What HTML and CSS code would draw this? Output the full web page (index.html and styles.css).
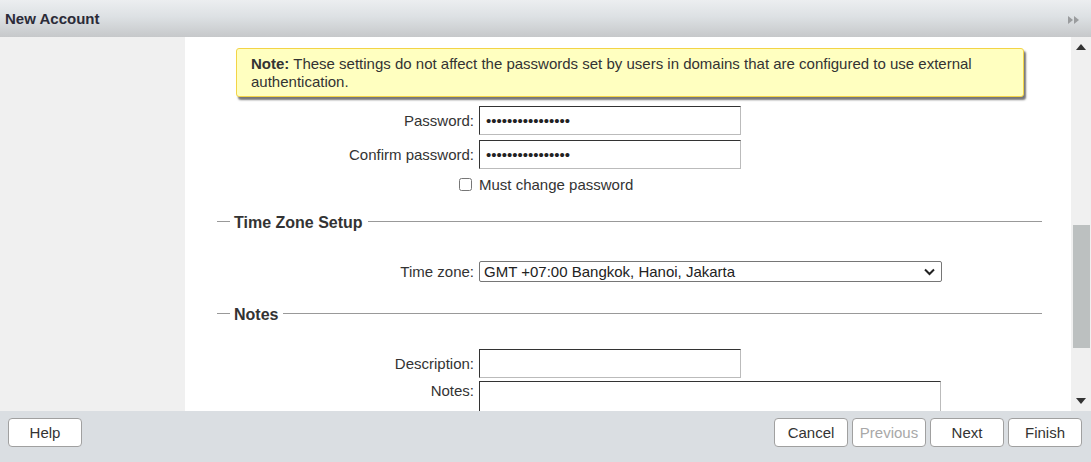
FILE: index.html
```html
<!DOCTYPE html>
<html>
<head>
<title>New Account</title>
<link rel="stylesheet" href="styles.css">
</head>
<body>

<div class="window">
  <div class="titlebar">
    <span class="title">New Account</span>
    <svg class="collapse" width="11" height="8" viewBox="0 0 11 8">
      <path d="M0 0 L5 4 L0 8 Z M6 0 L11 4 L6 8 Z" fill="#9a9c9e"/>
    </svg>
  </div>

  <div class="main">
    <div class="sidebar"></div>

    <div class="content">
      <div class="note">
        <span class="note-tag">Note:</span> These settings do not affect the passwords set by users in domains that are configured to use external authentication.
      </div>

      <div class="row first">
        <label>Password:</label>
        <input type="password" class="text" value="1234567890123456">
      </div>
      <div class="row">
        <label>Confirm password:</label>
        <input type="password" class="text" value="1234567890123456">
      </div>
      <div class="row check">
        <input type="checkbox" id="mustChange">
        <label for="mustChange" class="check-label">Must change password</label>
      </div>

      <div class="section tz">Time Zone Setup</div>

      <div class="row select-row">
        <label>Time zone:</label>
        <div class="select">
          <span>GMT +07:00 Bangkok, Hanoi, Jakarta</span>
          <svg width="11" height="8" viewBox="0 0 11 8">
            <path d="M1 1.5 L5.5 6 L10 1.5" fill="none" stroke="#222" stroke-width="2"/>
          </svg>
        </div>
      </div>

      <div class="section notes">Notes</div>

      <div class="row desc">
        <label>Description:</label>
        <input type="text" class="text">
      </div>
      <div class="row notes-row">
        <label>Notes:</label>
        <textarea class="text area"></textarea>
      </div>
    </div>

    <div class="scrollbar">
      <svg class="arrow" width="10" height="6" viewBox="0 0 10 6"><path d="M0 6 L5 0 L10 6 Z" fill="#333"/></svg>
      <div class="track"><div class="thumb"></div></div>
      <svg class="arrow" width="10" height="6" viewBox="0 0 10 6"><path d="M0 0 L5 6 L10 0 Z" fill="#333"/></svg>
    </div>
  </div>

  <div class="footer">
    <button class="btn">Help</button>
    <div class="nav">
      <button class="btn">Cancel</button>
      <button class="btn" disabled>Previous</button>
      <button class="btn">Next</button>
      <button class="btn">Finish</button>
    </div>
  </div>
</div>

</body>
</html>
```

FILE: styles.css
```css
html, body { margin: 0; padding: 0; height: 100%; }
body { font-family: Arial, "Liberation Sans", sans-serif; font-size: 15px; color: #333; }

.window { display: flex; flex-direction: column; height: 100vh; overflow: hidden; }

.titlebar {
  height: 37px;
  flex: none;
  display: flex;
  align-items: center;
  justify-content: space-between;
  padding: 0 12px 0 5px;
  box-sizing: border-box;
  background: linear-gradient(#eceef0, #dde1e4 45%, #c6c8ca);
}
.title { font-weight: bold; font-size: 15px; color: #2b2b38; }
.collapse { margin-top: 2px; }

.main { flex: 1; display: flex; min-height: 0; }
.sidebar { width: 185px; flex: none; background: #f0f0f0; }

.content { flex: 1; background: #fff; overflow: hidden; }

.note {
  margin: 11px 0 0 51px;
  width: 788px;
  box-sizing: border-box;
  padding: 6px 14px 5px;
  line-height: 18px;
  background: #ffffc0;
  border: 1px solid #f3d447;
  border-radius: 3px;
  box-shadow: 2px 3px 2px #777;
}
.note-tag { font-weight: bold; }

.row {
  display: grid;
  grid-template-columns: 289px auto;
  column-gap: 5px;
  align-items: center;
  margin-top: 5px;
}
.row label { text-align: right; }
.row.first { margin-top: 9px; }

.text {
  width: 262px;
  height: 29px;
  box-sizing: border-box;
  padding: 0 6px;
  border: 1px solid;
  border-color: #333 #bbb #bbb #333;
  font-family: inherit;
  font-size: 15px;
  color: #222;
  background: #fff;
}
.area { width: 462px; height: 60px; resize: none; align-self: start; }
.notes-row { margin-top: 3px; align-items: start; }
.notes-row label { padding-top: 1px; }

.row.check { margin-top: 7px; }
.row.check input { justify-self: end; margin: 0 2px 0 0; width: 13px; height: 13px; }
.row.check .check-label { text-align: left; }

/* legend-style heading: short dash, title, rule to the right */
.section {
  display: flex;
  align-items: center;
  gap: 4px;
  height: 20px;
  margin: 20px 29px 0 32px;
  font-size: 16px;
  font-weight: bold;
  color: #333;
}
.section::before { content: ""; width: 13px; height: 1px; background: #999; transform: translateY(-2px); }
.section::after { content: ""; flex: 1; height: 1px; background: #999; margin-left: 1px; transform: translateY(-2px); }
.section.notes { margin-top: 23px; }

.select-row { margin-top: 28px; }
.select {
  width: 463px;
  height: 21px;
  box-sizing: border-box;
  display: flex;
  align-items: center;
  justify-content: space-between;
  padding: 0 6px 0 4px;
  border: 1px solid #767676;
  border-radius: 2px;
  color: #222;
}

.desc { margin-top: 24px; }

.scrollbar {
  width: 20px;
  flex: none;
  background: #f0f0f0;
  display: flex;
  flex-direction: column;
  align-items: center;
}
.arrow { margin: 7px 0; flex: none; }
.track { flex: 1; width: 100%; padding-top: 168px; box-sizing: border-box; }
.thumb { height: 123px; margin-left: 2px; margin-right: 1px; background: #bcc0c0; }

.footer {
  height: 51px;
  flex: none;
  box-sizing: border-box;
  padding: 7px 9px 0 8px;
  display: flex;
  justify-content: space-between;
  align-items: flex-start;
  background: #dadee2;
}
.nav { display: flex; gap: 4px; }

.btn {
  width: 74px;
  height: 29px;
  border: 1px solid #a0a0a0;
  border-radius: 4px;
  background: #fff;
  font-family: inherit;
  font-size: 15px;
  color: #333;
  padding: 0;
}
.btn:disabled { color: #a8a8a8; }
```
